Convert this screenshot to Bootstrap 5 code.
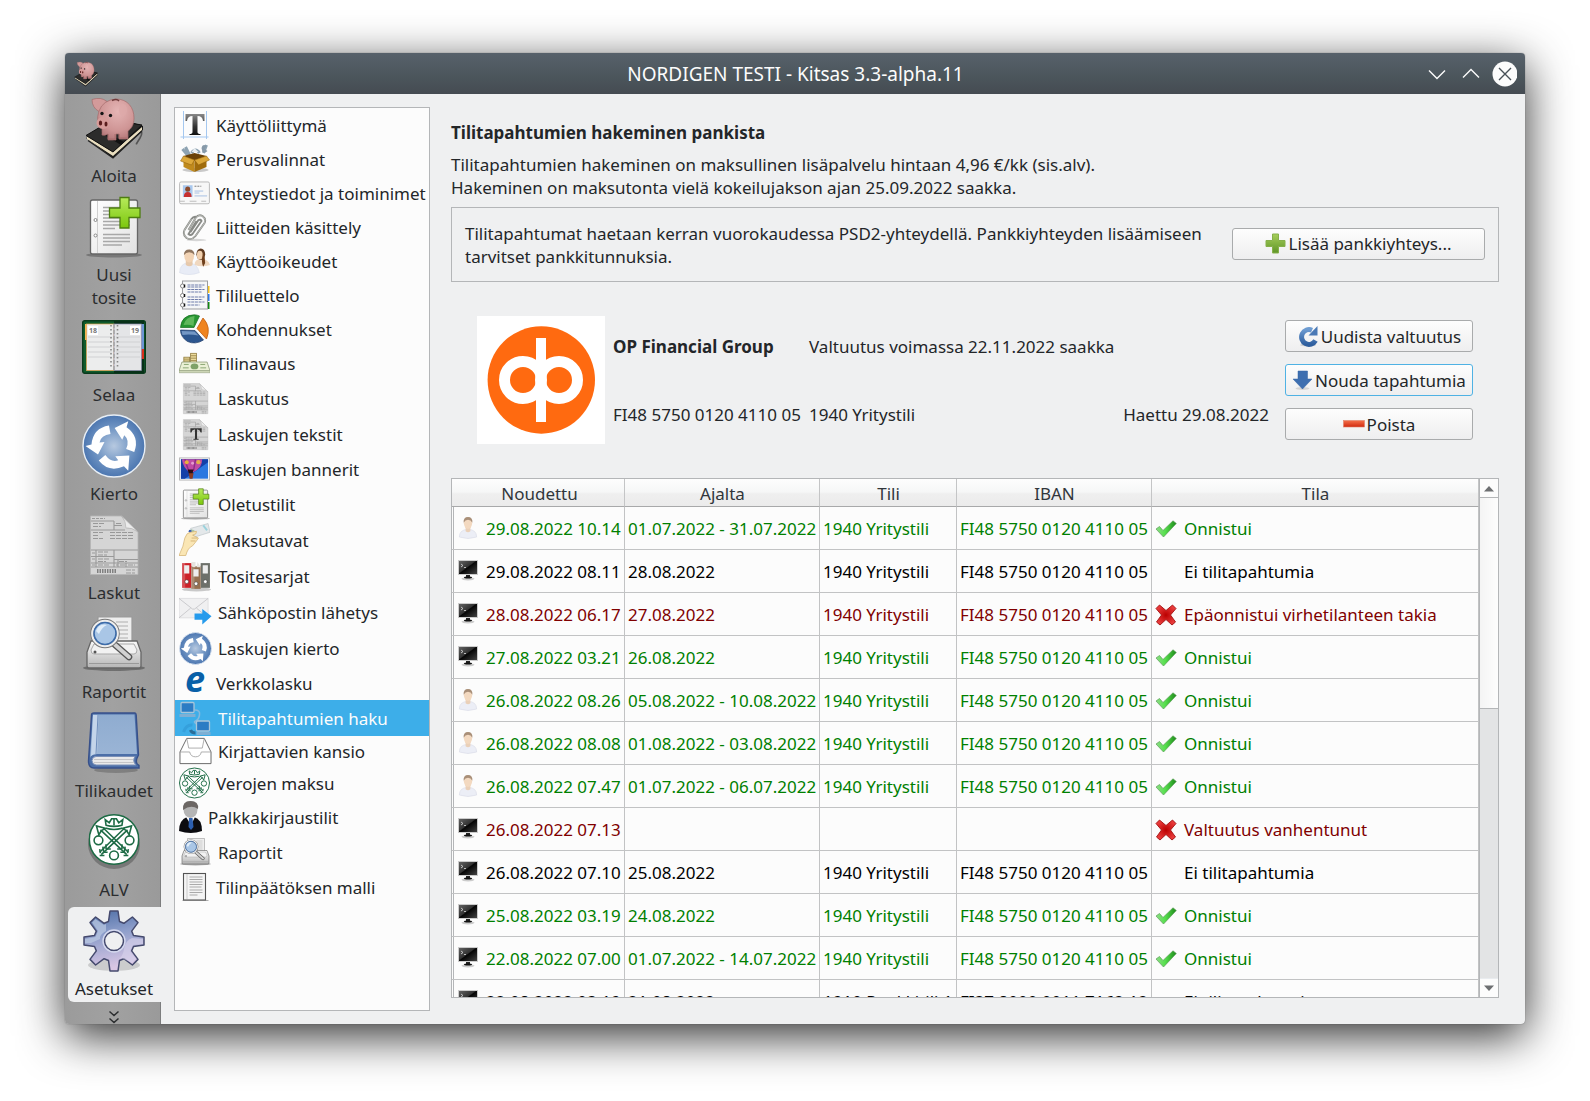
<!DOCTYPE html>
<html lang="fi">
<head>
<meta charset="utf-8">
<title>NORDIGEN TESTI - Kitsas 3.3-alpha.11</title>
<link href="https://cdn.jsdelivr.net/npm/bootstrap@5.3.0/dist/css/bootstrap.min.css" rel="stylesheet">
<style>
body{font-family:"Noto Sans",sans-serif;font-size:17px;line-height:23px;color:#232629;background:#fff;height:1101px;overflow:hidden;padding:53px 65px 0}
svg{flex:none;display:block}
.app-window{width:1460px;height:971px;border-radius:4px;background:#eff0f1;box-shadow:0 12px 46px rgba(0,0,0,.82),0 0 1px rgba(0,0,0,.6)}
.titlebar{height:41px;background:linear-gradient(#57616b,#4b555b 60%,#454b52);color:#fcfcfc;border-radius:4px 4px 0 0;padding:0 8px 0 8px}
.titlebar .caption{font-size:19px;line-height:26px;padding-left:1px}
.title-side{width:110px}
.app-body{height:930px}
.sidebar{width:96px;background:linear-gradient(90deg,#9b9b9b,#a1a1a1 50%,#9a9a9a);border-right:1px solid #7c7d7e;border-radius:0 0 0 4px;color:#2b2d2f}
.side-item{padding:2px 0 2px 3px;gap:4px;margin-bottom:4px;text-align:center}
.side-item.two-line{margin-bottom:2px}
.side-item.sel{background:#eff0f1;border-radius:6px 0 0 6px;margin:0 -1px 0 3px;padding-left:0;padding-right:1px;color:#232629}
.settings-list{width:256px;height:904px;margin:13px 0 0 13px;border:1px solid #b4b6b8;background:#fcfcfc}
.settings-list .list-group-item{height:34px;padding:0 0 0 4px;border:0;background:transparent;color:#232629;gap:6px;white-space:nowrap}
.settings-list .tall{height:36px}
.settings-list .h30{height:30px}
.settings-list .active{background:#3daee9;color:#fcfcfc}
.content-pane{width:1048px;margin:27px 0 0 21px}
.intro{margin-top:9px}
.frame-box{border:1px solid #b4b6b8;height:75px;margin-top:8px;padding:0 13px}
.btn-qt{height:32px;border:1px solid #a9abac;border-radius:3px;background:linear-gradient(#fdfdfd,#eeeeef);color:#232629;font-size:17px;line-height:23px;padding:0;display:flex;align-items:center;justify-content:center;gap:2px;white-space:nowrap}
.btn-qt svg{margin-top:-1px}
.btn-wide{width:253px;margin-bottom:2px}
.btn-qt.hot{border-color:#4fb2e4}
.bank{margin:34px 26px 0;height:128px}
.bank-info{margin:-4px 0 0 8px;width:656px}
.bank-info>div{height:68px}
.bank-name{width:196px}
.bank-buttons{width:188px;gap:12px;margin:4px 0 0 16px}
.log{height:520px;border:1px solid #b4b6b8;margin-top:34px;background:#fcfcfc;overflow:hidden}
.log-table{width:1027px;table-layout:fixed;margin:0;white-space:nowrap;font-size:17px;line-height:23px;border-collapse:separate;border-spacing:0}
.log-table th{height:28px;padding:1px 0 0 1px;font-weight:400;text-align:center;color:#31363b;background:linear-gradient(#fdfdfd,#f6f7f7 48%,#efefef 55%,#ebebeb);border:0;border-right:1px solid #c4c5c6;border-bottom:1px solid #a8a9aa}
.log-table th:first-child{padding-left:3px}
.log-table td{height:43px;padding:1px 3px 0;vertical-align:middle;background:transparent;border:0;border-right:1px solid #c2c3c4;border-bottom:1px solid #c2c3c4;color:inherit;box-shadow:none}
.log-table td:first-child{padding-left:6px;background:linear-gradient(#b4b6b8,#b4b6b8) 1px 0/1px 100% no-repeat}
.log-table .pair{display:flex;align-items:center;gap:8px}
.log-table .pair svg{margin-top:-2px}
.log-table td:last-child .pair{gap:7px}
.log-table td:last-child .pair svg{margin-top:0}
.ok{color:#008000}.err{color:#800000}.none{color:#000}
.scroller{width:19px;border-left:1px solid #b4b6b8}
.scroller .arrow{height:18px}
.thumb{height:212px;background:linear-gradient(90deg,#f4f4f4,#fdfdfd);border-top:1px solid #b4b6b8;border-bottom:1px solid #b4b6b8}
.trough{background:#e3e4e5}
</style>
<script src="https://cdn.jsdelivr.net/npm/bootstrap@5.3.0/dist/js/bootstrap.bundle.min.js"></script>
</head>
<body>
<svg width="0" height="0" class="position-absolute">
<defs>
<radialGradient id="gPig" cx=".55" cy=".3" r=".8"><stop offset="0" stop-color="#e5b5b5"/><stop offset=".6" stop-color="#cf9595"/><stop offset="1" stop-color="#a86c6e"/></radialGradient>
<radialGradient id="gCyc"><stop offset="0" stop-color="#b7c9e0"/><stop offset=".6" stop-color="#6f94c3"/><stop offset="1" stop-color="#4c76b0"/></radialGradient>
<linearGradient id="gGreen" x2="0" y2="1"><stop offset="0" stop-color="#b6ea5a"/><stop offset="1" stop-color="#7bc70c"/></linearGradient>
<linearGradient id="gPaper" x2="1" y2="1"><stop offset="0" stop-color="#fff"/><stop offset="1" stop-color="#e2e2e2"/></linearGradient>
<linearGradient id="gGear" x2=".2" y2="1"><stop offset="0" stop-color="#4b6da5"/><stop offset=".45" stop-color="#8f9fcb"/><stop offset="1" stop-color="#d9c6e4"/></linearGradient>
<linearGradient id="gBook" x2="0" y2="1"><stop offset="0" stop-color="#8facd0"/><stop offset="1" stop-color="#9bb5d6"/></linearGradient>
<linearGradient id="gMetal" x2="0" y2="1"><stop offset="0" stop-color="#fafafa"/><stop offset="1" stop-color="#b5b5b5"/></linearGradient>
<linearGradient id="gScr" x2="1" y2="1"><stop offset="0" stop-color="#666"/><stop offset=".45" stop-color="#333"/><stop offset=".5" stop-color="#050505"/><stop offset="1" stop-color="#484848"/></linearGradient>
<linearGradient id="gPlus" x2="0" y2="1"><stop offset="0" stop-color="#a7cf5b"/><stop offset="1" stop-color="#5f9527"/></linearGradient>
<linearGradient id="gBlue" x2="0" y2="1"><stop offset="0" stop-color="#6d9bd1"/><stop offset="1" stop-color="#2f5f9f"/></linearGradient>
<linearGradient id="gRed" x2="0" y2="1"><stop offset="0" stop-color="#f5704a"/><stop offset="1" stop-color="#d02a10"/></linearGradient>
<linearGradient id="gChk" x2="1"><stop offset="0" stop-color="#8fdc88"/><stop offset=".45" stop-color="#55e04c"/><stop offset="1" stop-color="#1f8a1b"/></linearGradient>
<radialGradient id="gX"><stop offset="0" stop-color="#b00"/><stop offset="1" stop-color="#e83a3a"/></radialGradient>
<linearGradient id="gT" x2="0" y2="1"><stop offset="0" stop-color="#888"/><stop offset=".6" stop-color="#333"/><stop offset="1" stop-color="#111"/></linearGradient>

<symbol id="pig" viewBox="0 0 64 64">
 <path d="M57 34q5 1 1 8q-5 8-3 5" fill="none" stroke="#555" stroke-width="1.600"/>
 <path d="M4 42L31 62L61 34V30L52 27L20 34Z" fill="#1a1a18"/>
 <path d="M5 43L31 60L60 34L60 31L31 56L5 40Z" fill="#eadfc0"/>
 <path d="M6 44.500L31 62L60 35" fill="none" stroke="#222" stroke-width="1.300"/>
 <path d="M4 39.500L30 24L60 29L31 56Z" fill="#2c2c2b" stroke="#111"/>
 <path d="M19 37L22 35L42 46L39 49Z" fill="#111"/>
 <path d="M10 3.500q9-3 15 2l-8 10q-7-4-7-12z" fill="#d39a9a" stroke="#a56b6b" stroke-width=".7"/>
 <path d="M34 3C46 3 52 12 52 22C52 29 49 33 46 35V43H37V38H34V44H26V38Q23 40 20 39V32Q13 27 17 15Q21 4 34 3Z" fill="url(#gPig)" stroke="#a56b6b" stroke-width=".7"/>
 <ellipse cx="21" cy="27" rx="6.500" ry="6" fill="#d79c9a"/><ellipse cx="18.500" cy="27" rx="1.700" ry="2.600" fill="#5a1d1d"/><ellipse cx="24" cy="28" rx="1.500" ry="2.500" fill="#5a1d1d"/>
 <circle cx="20" cy="17.500" r="1.700" fill="#151515"/><circle cx="28.500" cy="19.500" r="1.700" fill="#151515"/>
 <path d="M30 4.500q5-2 7 .5" stroke="#713c3c" stroke-width="1.500" fill="none"/><ellipse cx="41" cy="14" rx="4" ry="6" fill="#dda9a9" opacity=".8"/>
 <path d="M26 38v5h7v-5M37 38v4h8" fill="none" stroke="#a56b6b" stroke-width=".8"/>
</symbol>
<symbol id="newdoc" viewBox="0 0 64 64">
 <ellipse cx="32" cy="60" rx="28" ry="2.500" fill="#000" opacity=".25"/>
 <rect x="8.500" y="5" width="47" height="54" rx="2" fill="url(#gPaper)" stroke="#666" stroke-width="1.300"/>
 <path d="M15.500 6v52" stroke="#d0d0d0"/><circle cx="13.500" cy="25" r="1.500" fill="#fff" stroke="#888"/><circle cx="13.500" cy="40.500" r="1.500" fill="#fff" stroke="#888"/>
 <path d="M21 12.500h20M21 16h20M21 19.500h20M21 23h20M21 26.500h27M21 30h27M21 33.500h12M21 39.500h27M21 43h27M21 46.500h27M21 50h19" stroke="#a8a8a8" stroke-width="1.300"/>
 <path d="M38 2.500h9V13h11v9.500H47V33h-9V22.500H27.500V13H38Z" fill="url(#gGreen)" stroke="#4d7d10" stroke-width="1.300"/>
</symbol>
<symbol id="daybook" viewBox="0 0 64 54">
 <rect x=".7" y=".7" width="62.600" height="52.600" rx="2" fill="#0f5b2c" stroke="#0a3a1c" stroke-width="1.400"/><path d="M32 1h30v52H32z" fill="#073018"/>
 <rect x="3" y="4" width="14" height="16" fill="#f5b552"/><rect x="50" y="4" width="12" height="26" fill="#6d95d4"/><rect x="52" y="29" width="10" height="10" fill="#d8301c"/>
 <rect x="4.500" y="4" width="27.500" height="46.500" fill="#eceded" stroke="#e6a350" stroke-width=".7"/><rect x="32" y="4" width="27.500" height="46.500" fill="#e4e5e7" stroke="#88a" stroke-width=".7"/>
 <path d="M6 17h24M6 22h24M6 27h24M6 32h24M6 37h24M34 17h24M34 22h24M34 27h24M34 32h24M34 37h24" stroke="#d0d1d3"/>
 <rect x="6" y="6" width="10" height="9" fill="#fff"/><rect x="48" y="6" width="10" height="9" fill="#fff"/>
 <text x="7" y="13.300" font-size="7" font-weight="bold" fill="#777">18</text><text x="49" y="13.300" font-size="7" font-weight="bold" fill="#777">19</text>
 <path d="M29 5v44M35.500 5v44" stroke="#888" stroke-width="1.600" stroke-dasharray="1.500 2.500"/><path d="M32 4v46" stroke="#a8a8a8" stroke-width="1.600" stroke-dasharray="4 2"/>
</symbol>
<symbol id="cycle" viewBox="0 0 64 64">
 <circle cx="32" cy="32" r="31" fill="url(#gCyc)" stroke="#e7eef6" stroke-width="1.400"/>
 <g fill="#fff"><path id="cyArr" d="M27 11.500L28.500 20Q19 21 17.500 28.500L22.500 28L16 40.500L3.500 32L9.500 30.500Q11 14 27 11.500Z"/>
 <use href="#cyArr" transform="rotate(120 32 32)"/><use href="#cyArr" transform="rotate(240 32 32)"/></g>
</symbol>
<symbol id="invoice" viewBox="0 0 64 64">
 <path d="M8.500 3h31L56 19V61.500H8.500Z" fill="#d5d5d5" stroke="#b5b5b5" stroke-width=".8"/>
 <path d="M39.500 3Q45 10 44 15Q51 15 56 19Z" fill="#bcbcbc"/><path d="M39.500 3L56 19Q49 14 44 15Q44 8 39.500 3Z" fill="#ececec" stroke="#aaa" stroke-width=".5"/>
 <g stroke="#999" stroke-width="1.100" fill="none"><path d="M10 5.500h13" stroke-dasharray="3 1"/><path d="M9 8h23M32 8v9M9 17h34M32 12.500h8M9 37h47M9 43.500h23M9 50h47M9 54h47M14 37v17M32 37v17M32 46.500h24M36 46.500v7M44 50v4"/>
 <path d="M11 10.500h12M11 13.500h8M34 10.500h5M11 19.500h10M11 22.500h6M11 25.500h10M28 19.500h24M28 22.500h24M28 25.500h24M16 39h10M16 42h9M16 46h12M16 48.500h8M37 48.500h8M10 40h3M10 46h3M10 52h3M16 52h12M34 52h2M38 52h5M46 52h7M44 57h9M44 60h9" stroke-dasharray="5 1"/></g>
 <path d="M15 58h19" stroke="#808080" stroke-width="4" stroke-dasharray="1.500 1"/>
</symbol>
<symbol id="report" viewBox="0 0 64 64">
 <ellipse cx="32" cy="56" rx="31" ry="3" fill="#000" opacity=".3"/>
 <path d="M16 5h34v28H16z" fill="#eee" stroke="#999" stroke-width="1.200"/><path d="M34 10h12M34 14h12M34 18h12M34 22h12M34 26h12" stroke="#c4c4c4" stroke-width="1.500"/>
 <path d="M9 29H55L59 40V54Q59 56 57 56H7Q5 56 5 54V40Z" fill="url(#gMetal)" stroke="#666" stroke-width="1.300"/>
 <path d="M12 32H52L55 38Q55 42 52 42H12Q9 42 9 38Z" fill="#f2f2f2" stroke="#aaa"/><path d="M7 51.500h50" stroke="#999"/><circle cx="13" cy="40" r="1.500" fill="#555"/>
 <path d="M31 31L47 45" stroke="#555" stroke-width="6.500" stroke-linecap="round"/><path d="M31 31L47 45" stroke="#d2d2d2" stroke-width="4" stroke-linecap="round"/>
 <circle cx="23" cy="21.500" r="12.700" fill="#a9c6e6" stroke="#777" stroke-width="4"/><circle cx="23" cy="21.500" r="12.700" fill="none" stroke="#eee" stroke-width="2.300"/><circle cx="23" cy="21.500" r="11" fill="none" stroke="#3c6cab" stroke-width="1.500"/><path d="M14 19Q17 11 25 13Q20 15 17 22Z" fill="#e0edf9"/>
</symbol>
<symbol id="book" viewBox="0 0 64 64">
 <ellipse cx="34" cy="59" rx="22" ry="3" fill="#000" opacity=".2"/>
 <path d="M9.500 4Q9.500 2 12 2H53Q54 2 54.200 4L56.500 44Q52 52 57 54.500V57H12Q6.500 57 6.500 50Z" fill="#4c6fa8" stroke="#37508a" stroke-width="1.400"/>
 <path d="M11 3.500H52.500L55 43H15Q9 43 8 47Z" fill="url(#gBook)"/><path d="M11 4L9 45Q11 43 15 43L16.500 4" fill="#c4d5ea"/><path d="M16 4L14 43" stroke="#6f8ebc"/>
 <path d="M14 45.500H53Q50 50 54 54H14Q10 53.500 10 49.500Q10.500 45.500 14 45.500Z" fill="#e9e9ea" stroke="#7b90b8"/><path d="M12 48.500h39M12 51.500h40" stroke="#c5c5c8"/>
</symbol>
<symbol id="seal" viewBox="0 0 64 64">
 <circle cx="32" cy="32" r="31" fill="#fff" stroke="#1d6b45" stroke-width="2"/>
 <g fill="none" stroke="#1d6b45" stroke-width="2">
 <path d="M22 14l-1-7 5 4 3-5 3 0 3 0 3 5 5-4-1 7q-10 3-20 0zM22 18q10 3 20 0M32 6v8"/>
 <circle cx="12.500" cy="33" r="5.500"/><circle cx="51.500" cy="33" r="5.500"/><circle cx="32" cy="52" r="5.500"/>
 <path d="M15 20L48 51M18 17L50 48M49 20L16 51M46 17L14 48M10 15l3 11 3-5 5-3zM54 15l-3 11-3-5-5-3z"/>
 <path d="M14 44l1 5M18 41l1 6M22 38v6M50 44l-1 5M46 41l-1 6M42 38v6M20 52h-6M24 48h-6M28 44h-6M44 52h6M40 48h6M36 44h6"/></g>
</symbol>
<symbol id="gear" viewBox="0 0 64 64">
 <ellipse cx="32" cy="56" rx="26" ry="6" fill="#000" opacity=".15"/>
 <path fill-rule="evenodd" d="M26.500 12.500L28 2L36 2L37.500 12.500L41.900 14.300L50.400 8L56 13.600L49.700 22.100L51.500 26.500L62 28L62 36L51.500 37.500L49.700 41.900L56 50.400L50.400 56L41.900 49.700L37.500 51.500L36 62L28 62L26.500 51.500L22.100 49.700L13.600 56L8 50.400L14.300 41.900L12.500 37.500L2 36L2 28L12.500 26.500L14.300 22.100L8 13.600L13.600 8L22.100 14.300ZM32 22.500A9.500 9.500 0 1 0 32 41.500A9.500 9.500 0 1 0 32 22.500Z" fill="url(#gGear)" stroke="#454a6e" stroke-width="1.500" stroke-linejoin="round"/>
 <path d="M3 30L13.500 28L16 22L10 13.500L13.500 10L22 16L24 15V22Q17 26 18 30L9 34H3Z" fill="#bccbe3" opacity=".7"/><path d="M61 30L50 29Q43 32 42 40Q41 47 37 50L40 49L50 54L54 50L48 42L51 36L61 35Z" fill="#d8d3ec" opacity=".6"/>
 <circle cx="32" cy="32" r="11" fill="none" stroke="#d5d9ee" stroke-width="1.300"/>
</symbol>

<symbol id="typeT" viewBox="0 0 30 30"><path d="M4 1v28M27 1v28M1 27h28" stroke="#a5c8f0" fill="none"/><path d="M6 4H25V11H23.500Q23 6 18 6V22Q18 24 21 24V25H10V24Q13 24 13 22V6Q8 6 7.500 11H6Z" fill="url(#gT)"/></symbol>
<symbol id="toolbox" viewBox="0 0 30 30"><ellipse cx="16" cy="26" rx="13" ry="2" fill="#000" opacity=".2"/><path d="M3 5l5 6M6 3l4 8M24 9l3-8M12 9q4-6 8 0" stroke="#8ea3b2" stroke-width="3" fill="none"/><path d="M22 4q1-5 5-2l-2 3 3 2q-3 3-5 1" fill="#8799a8"/><path d="M12 8l3-4 4 4z" fill="#e9eef1"/><path d="M4 12L15 9L27 12L15 17Z" fill="#6b4208"/><path d="M4 12L15 16V28L4 23Z" fill="#c08a1c"/><path d="M27 12L15 16V28L27 23Z" fill="#a06c0c"/><path d="M4 12L1 17L12 21L15 16ZM27 12L30 16L19 21L15 16Z" fill="#dca83a" stroke="#8a5c0a" stroke-width=".5"/></symbol>
<symbol id="idcard" viewBox="0 0 32 24"><rect x=".6" y=".6" width="30.800" height="22.500" rx="1.500" fill="#f7f7f7" stroke="#b9b9b9"/><rect x="4" y="4" width="10" height="12" fill="#a9c8ee"/><circle cx="9" cy="8" r="2.600" fill="#8b4a2c"/><path d="M5 16q0-5 4-5t4 5z" fill="#c63030"/><path d="M16 5h7" stroke="#777" stroke-dasharray="2 1"/><path d="M16 10h9M16 12h5M16 15h13" stroke="#a4bfe2"/><path d="M1 20.500h30" stroke="#bbb" stroke-dasharray="5 5 7 5"/></symbol>
<symbol id="clip" viewBox="0 0 30 30"><ellipse cx="17" cy="28" rx="10" ry="1.200" fill="#000" opacity=".15"/><path d="M9 18L16 6Q19 2 23 4Q27 7 25 11L16 24Q12 29 7 26Q3 23 5 18L12 7Q14 4 17 5M11 20L19 8Q21 7 22 9L13 22Q11 24 9 22L17 9" fill="none" stroke="#888a86" stroke-width="1.900"/><path d="M9 18L16 6Q19 2 23 4Q27 7 25 11L16 24Q12 29 7 26Q3 23 5 18L12 7" fill="none" stroke="#d5d6d2" stroke-width=".6"/></symbol>
<symbol id="users" viewBox="0 0 32 28"><path d="M16 18q0-6 7-6t9 6q-8 3-16 0z" fill="#f0d8c0"/><ellipse cx="22.500" cy="7" rx="4.500" ry="6" fill="#5e3a20"/><ellipse cx="21.500" cy="8" rx="3" ry="4.500" fill="#f1d0ae"/><path d="M25 5q2 5 2 11l-2 4q-2-5-1-9z" fill="#70401c"/><path d="M.5 26Q1 16 10 16T21 26Q10 30 .5 26Z" fill="#e8ecf6" stroke="#d2d7e6" stroke-width=".5"/><path d="M7 13h7v5q-3 3-7 0z" fill="#e6c9ac"/><ellipse cx="10.500" cy="9" rx="5" ry="6.500" fill="#f2d3b4"/><path d="M5 8Q5 2 10.500 2T16 8Q14 5 10.500 5T5 8Z" fill="#8f755e"/></symbol>
<symbol id="notebook" viewBox="0 0 30 30"><rect x="26" y="6" width="4" height="7" fill="#f3c21c"/><rect x="26" y="14" width="4" height="7" fill="#2f79e8"/><rect x="26" y="22" width="4" height="7" fill="#118811"/><rect x="3" y="1" width="25" height="28" fill="#f5f6f7" stroke="#9a9c9f"/><path d="M8 5h17M8 7h15M8 9.500h17M8 12h14M8 17h17M8 19.500h15M8 22h17M8 25h12" stroke="#6e7cab" stroke-width="1.100" stroke-dasharray="3 .7"/><g fill="#fff" stroke="#888"><circle cx="3" cy="6" r="2"/><circle cx="3" cy="15.500" r="2"/><circle cx="3" cy="25" r="2"/></g><path d="M5 4.500v3M5 14v3M5 23.500v3" stroke="#111" stroke-width="1.500"/></symbol>
<symbol id="pie" viewBox="0 0 30 30"><path d="M14.500 13.500L1 13.500Q2 1 15 .8Q18 1 20 2Z" fill="#279632" stroke="#176b1f" stroke-width=".7"/><path d="M14 12Q10 10 4 11Q6 3 15 2Z" fill="#86cf78" opacity=".6"/><path d="M17.500 14.500L23.500 4Q32 13 27 25Z" fill="#ef8420" stroke="#c05c0c" stroke-width=".8"/><path d="M1 16L15.500 16.500L24 26Q16 31 8 27.500Q1 23 1 16Z" fill="#2c568f" stroke="#1c3b68" stroke-width=".7"/><path d="M2 17L15 17.500L19 21.500Q10 20 3 21Z" fill="#86a7d2" opacity=".8"/></symbol>
<symbol id="cash" viewBox="0 0 32 24"><g fill="#ecdb9c" stroke="#8f7a3d" stroke-width=".8"><rect x="5" y="6" width="6" height="8"/><rect x="12" y="2" width="6" height="12"/><path d="M5 8h6M5 10h6M5 12h6M12 4.500h6M12 7h6M12 9.500h6"/></g><path d="M3 11H29L32 20H0Z" fill="#eaf0d5" stroke="#8b9977" stroke-width=".8"/><path d="M0 20h32v2H0z" fill="#d8e0c0" stroke="#8b9977" stroke-width=".6"/><ellipse cx="16" cy="15.500" rx="4" ry="3" fill="#7fa268"/><path d="M5 13.500h5M22 13.500h5M4 17h6M22 17h6" stroke="#8aa674"/></symbol>
<symbol id="invT" viewBox="0 0 32 32"><use href="#invoice" width="32" height="32"/><path d="M11 10H22V14H21Q20.500 11.500 17.500 11V20H19V21H14V20H15.500V11Q12.500 11.500 12 14H11Z" fill="#333"/></symbol>
<symbol id="balloon" viewBox="0 0 32 24"><rect x=".6" y=".6" width="30.800" height="22.800" fill="#fff" stroke="#b5b5b5"/><rect x="2" y="2" width="28" height="20" fill="#2c78e0"/><path d="M2 2h28v3L6 22H2z" fill="#1440a8"/><path d="M3 2H24Q24 11 15 15H11Q4 11 3 2Z" fill="#c04ba4"/><path d="M6 2l4 12M17 2l-2 12" stroke="#8c2f88" stroke-width="1.500"/><circle cx="8" cy="5" r="2" fill="#e8b23a"/><circle cx="20" cy="5" r="2.200" fill="#e2b04a"/><circle cx="14" cy="6" r="1.500" fill="#e59ad0"/><path d="M10 16h5l-1 6h-3z" fill="#8a3a20"/><path d="M9 12.500h6l-1 4h-4z" fill="#2a0c14"/></symbol>
<symbol id="hand" viewBox="0 0 32 34"><path d="M12 5L30 0L32 9L16 14Z" fill="#e4e8ea" stroke="#bcc3c6" stroke-width=".7"/><path d="M12 6l4 1-1 6z" fill="#a6c7a8"/><circle cx="11.500" cy="8" r="1.500" fill="#3c5fb0"/><path d="M25 2l4 5" stroke="#9bd2dc" stroke-width="2"/><path d="M0 33Q5 23 6 15Q8 9 12 9L18 8Q19 11 14 12L20 15L18 18L14 23Q9 25 7 33Z" fill="#fae6b4" stroke="#d5b577" stroke-width=".8"/><path d="M13 15h6M12 18h5" stroke="#d5b577"/></symbol>
<symbol id="binders" viewBox="0 0 32 30"><ellipse cx="17" cy="27.500" rx="14" ry="2" fill="#000" opacity=".2"/><path d="M3 2h9v24H3z" fill="#cc2229"/><path d="M21 2h9v24h-9z" fill="#6d706a"/><path d="M12 5h9v22h-9z" fill="#957050"/><path d="M12 1h4v5h-3zM18 1l3 5h-4z" fill="#e6e4df"/><path d="M5 4h5v8H5zM14 8h5v7h-5zM23 4h5v8h-5z" fill="#ededed"/><path d="M3 2h3v24H3zM12 7h3v20h-3z" fill="#fff" opacity=".2"/><g fill="#fff" stroke="#333" stroke-width=".5"><circle cx="7.500" cy="20" r="1.800"/><circle cx="16.500" cy="22" r="1.800"/><circle cx="25.500" cy="20" r="1.800"/></g></symbol>
<symbol id="mail" viewBox="0 0 34 32"><path d="M0 2H30V22H0Z" fill="#f0f0f1" stroke="#d5d6d8" stroke-width=".7"/><path d="M0 2L14 13H16L30 2M0 22L12 12M30 22L18 12" fill="none" stroke="#bfc0c3" stroke-width=".8"/><path d="M16 17.500H24V13L33.500 20.500L24 29V24H16Z" fill="#269bec"/></symbol>
<symbol id="netw" viewBox="0 0 32 34"><path d="M15 9q6 0 5 5t-4 6 3 4" fill="none" stroke="#87b9dc" stroke-width="1.500"/><rect x="1.500" y="1.500" width="13" height="10" rx="1" fill="#2c7cc4" stroke="#a9c6da" stroke-width="1.300"/><path d="M0 13h16v3H0zM17 31h14v3H17z" fill="#7fb0d4"/><rect x="17" y="20" width="13" height="10" rx="1" fill="#2c7cc4" stroke="#a9c6da" stroke-width="1.300"/><path d="M4 31q3-8 9-7" stroke="#35a0dc" stroke-width="3" fill="none"/><path d="M11 29q1 3 5 3" stroke="#2b6d98" stroke-width="3" fill="none"/></symbol>
<symbol id="tray" viewBox="0 0 34 28"><path d="M8 1H26L33 15V27H1V15Z" fill="#fff" stroke="#666" stroke-width="1"/><path d="M1 15H11Q12 20 17 20T23 15H33M8 1L10 11M26 1L24 11M10 11H24" fill="none" stroke="#999" stroke-width=".8"/></symbol>
<symbol id="suit" viewBox="0 0 23 32"><path d="M0 30Q0 19 8 16L15 16Q23 18 23 30Q12 34 0 30Z" fill="#0c0c10"/><path d="M7 16L12 24L16 16Z" fill="#fff"/><path d="M10 17h3.500l1 9-2.500 3-2.500-3z" fill="#2c5fb0"/><ellipse cx="11.500" cy="8.500" rx="7" ry="8.500" fill="#b5b5b5"/><path d="M4 9Q3 0 11.500 0T19 8Q12 3 4 9Z" fill="#6c6764"/></symbol>
<symbol id="doc" viewBox="0 0 30 30"><path d="M3 28.500h26" stroke="#000" opacity=".3"/><rect x="4" y="1.500" width="22" height="26.500" fill="#f4f4f4" stroke="#555" stroke-width="1.100"/><path d="M7.500 2v25" stroke="#ccc"/><path d="M10 5h13M10 7.500h13M10 10h13M10 12.500h13M10 15h12M10 18h13M10 20.500h13M10 23h8" stroke="#aaa"/></symbol>

<symbol id="person" viewBox="0 0 20 24"><path d="M1 22Q1 14 10 14T19 22Q10 25 1 22Z" fill="#eceef6" stroke="#d6d8e4" stroke-width=".6"/><path d="M7.500 11h5v5q-2.500 2-5 0z" fill="#ead0b8"/><ellipse cx="10" cy="7.500" rx="4.300" ry="6" fill="#f3d9c0"/><path d="M5.400 7Q5 1 10 1T14.600 7Q13 4 10 4T5.400 7Z" fill="#a98f78"/></symbol>
<symbol id="term" viewBox="0 0 20 21"><rect x=".5" y=".5" width="19" height="14" fill="url(#gScr)" stroke="#ccc"/><path d="M3 4l2 1.500L3 7M6 7.500h2" stroke="#ddd" fill="none" stroke-width=".8"/><path d="M8 15h4v2H8z" fill="#222"/><ellipse cx="10" cy="18.800" rx="6.500" ry="1.600" fill="#ccc"/><ellipse cx="10" cy="17.500" rx="4" ry="1.100" fill="#111"/></symbol>
<symbol id="check" viewBox="0 0 22 18"><path d="M1 9L4.500 6.500L8 10.500L18 .8L21.300 3.500L8.500 17Z" fill="url(#gChk)" stroke="#5a9c58" stroke-width=".7"/></symbol>
<symbol id="cross" viewBox="0 0 22 22"><path d="M4.500 1L11 6.500L17.500 1L21 4.500L15.500 11L20.500 18L17 21L11 15.500L5 21L1.500 18L6.500 11L1 4.500Z" fill="url(#gX)" stroke="#a01010" stroke-width=".9" stroke-linejoin="round"/></symbol>
</defs></svg>

<div class="app-window d-flex flex-column">
 <header class="titlebar d-flex align-items-center justify-content-between">
  <div class="title-side"><svg width="26" height="28"><use href="#pig"/></svg></div>
  <div class="caption">NORDIGEN TESTI - Kitsas 3.3-alpha.11</div>
  <div class="title-side d-flex justify-content-end align-items-center">
   <svg width="92" height="26" viewBox="0 0 92 26" fill="none" stroke="#fcfcfc" stroke-width="1.400"><path d="M4 9.500l8 8 8-8M38 16.500l8-8 8 8"/><circle cx="80" cy="13" r="12.500" fill="#fcfcfc" stroke="none"/><path d="M74 7l12 12M86 7L74 19" stroke="#475057"/></svg>
  </div>
 </header>
 <div class="app-body d-flex">
  <nav class="sidebar d-flex flex-column">
   <div class="side-item d-flex flex-column align-items-center"><svg width="64" height="64"><use href="#pig"/></svg><span>Aloita</span></div>
   <div class="side-item two-line d-flex flex-column align-items-center"><svg width="64" height="64"><use href="#newdoc"/></svg><span>Uusi<br>tosite</span></div>
   <div class="side-item d-flex flex-column align-items-center"><svg width="64" height="64"><use href="#daybook"/></svg><span>Selaa</span></div>
   <div class="side-item d-flex flex-column align-items-center"><svg width="64" height="64"><use href="#cycle"/></svg><span>Kierto</span></div>
   <div class="side-item d-flex flex-column align-items-center"><svg width="64" height="64"><use href="#invoice"/></svg><span>Laskut</span></div>
   <div class="side-item d-flex flex-column align-items-center"><svg width="64" height="64"><use href="#report"/></svg><span>Raportit</span></div>
   <div class="side-item d-flex flex-column align-items-center"><svg width="64" height="64"><use href="#book"/></svg><span>Tilikaudet</span></div>
   <div class="side-item d-flex flex-column align-items-center"><svg width="64" height="64" viewBox="0 0 64 64"><ellipse cx="32" cy="34" rx="26" ry="25" fill="#000" opacity=".25"/><use href="#seal" x="6.500" y="4" width="51" height="51"/></svg><span>ALV</span></div>
   <div class="side-item sel d-flex flex-column align-items-center"><svg width="64" height="64"><use href="#gear"/></svg><span>Asetukset</span></div>
   <svg class="mt-2" style="margin-left:43px" width="12" height="14" fill="none" stroke="#2b2d2f" stroke-width="1.500"><path d="M1.500 1.500l4.500 4 4.500-4M1.500 8.500l4.500 4 4.500-4"/></svg>
  </nav>
  <div class="settings-list list-group rounded-0">
   <div class="list-group-item d-flex align-items-center"><svg width="31" height="30"><use href="#typeT"/></svg>Käyttöliittymä</div>
   <div class="list-group-item d-flex align-items-center"><svg width="31" height="30"><use href="#toolbox"/></svg>Perusvalinnat</div>
   <div class="list-group-item d-flex align-items-center"><svg width="31" height="30"><use href="#idcard"/></svg>Yhteystiedot ja toiminimet</div>
   <div class="list-group-item d-flex align-items-center"><svg width="31" height="30"><use href="#clip"/></svg>Liitteiden käsittely</div>
   <div class="list-group-item d-flex align-items-center"><svg width="31" height="30"><use href="#users"/></svg>Käyttöoikeudet</div>
   <div class="list-group-item d-flex align-items-center"><svg width="31" height="30"><use href="#notebook"/></svg>Tililuettelo</div>
   <div class="list-group-item d-flex align-items-center"><svg width="31" height="30"><use href="#pie"/></svg>Kohdennukset</div>
   <div class="list-group-item d-flex align-items-center"><svg width="31" height="30"><use href="#cash"/></svg>Tilinavaus</div>
   <div class="list-group-item tall d-flex align-items-center"><svg width="33" height="33"><use href="#invoice"/></svg>Laskutus</div>
   <div class="list-group-item tall d-flex align-items-center"><svg width="33" height="33"><use href="#invT"/></svg>Laskujen tekstit</div>
   <div class="list-group-item d-flex align-items-center"><svg width="31" height="30"><use href="#balloon"/></svg>Laskujen bannerit</div>
   <div class="list-group-item tall d-flex align-items-center"><svg width="33" height="34"><use href="#newdoc"/></svg>Oletustilit</div>
   <div class="list-group-item tall d-flex align-items-center"><svg width="31" height="34"><use href="#hand"/></svg>Maksutavat</div>
   <div class="list-group-item tall d-flex align-items-center"><svg width="33" height="31"><use href="#binders"/></svg>Tositesarjat</div>
   <div class="list-group-item tall d-flex align-items-center"><svg width="33" height="32"><use href="#mail"/></svg>Sähköpostin lähetys</div>
   <div class="list-group-item tall d-flex align-items-center"><svg width="33" height="33"><use href="#cycle"/></svg>Laskujen kierto</div>
   <div class="list-group-item d-flex align-items-center"><svg width="31" height="30" viewBox="0 0 30 30" overflow="visible"><text x="5.500" y="24" font-size="36" font-weight="bold" font-style="italic" font-family="Open Sans, sans-serif" fill="#0860a8">e</text></svg>Verkkolasku</div>
   <div class="list-group-item active tall d-flex align-items-center rounded-0 m-0"><svg width="33" height="34"><use href="#netw"/></svg>Tilitapahtumien haku</div>
   <div class="list-group-item h30 d-flex align-items-center"><svg width="33" height="28"><use href="#tray"/></svg>Kirjattavien kansio</div>
   <div class="list-group-item d-flex align-items-center"><svg width="31" height="32"><use href="#seal"/></svg>Verojen maksu</div>
   <div class="list-group-item d-flex align-items-center"><svg width="23" height="32"><use href="#suit"/></svg>Palkkakirjaustilit</div>
   <div class="list-group-item tall d-flex align-items-center"><svg width="33" height="32"><use href="#report"/></svg>Raportit</div>
   <div class="list-group-item d-flex align-items-center"><svg width="31" height="30"><use href="#doc"/></svg>Tilinpäätöksen malli</div>
  </div>
  <main class="content-pane">
   <div class="fw-bold">Tilitapahtumien hakeminen pankista</div>
   <div class="intro">Tilitapahtumien hakeminen on maksullinen lisäpalvelu hintaan 4,96 €/kk (sis.alv).<br>Hakeminen on maksutonta vielä kokeilujakson ajan 25.09.2022 saakka.</div>
   <div class="frame-box d-flex align-items-center justify-content-between">
    <div>Tilitapahtumat haetaan kerran vuorokaudessa PSD2-yhteydellä. Pankkiyhteyden lisäämiseen<br>tarvitset pankkitunnuksia.</div>
    <button class="btn btn-qt btn-wide"><svg width="21" height="21" viewBox="0 0 21 21"><path d="M7.500 1h6v6.500H20v6h-6.500V20h-6v-6.500H1v-6h6.500z" fill="url(#gPlus)" stroke="#86b04a"/></svg>Lisää pankkiyhteys...</button>
   </div>
   <div class="bank d-flex">
    <svg width="128" height="128" viewBox="0 0 128 128"><rect width="128" height="128" fill="#fff"/><circle cx="64.300" cy="64" r="53.700" fill="#ff6a10"/><g fill="none" stroke="#fff" stroke-width="11"><circle cx="46" cy="64" r="18.500"/><circle cx="82" cy="64" r="18.500"/></g><path d="M59 22h10v84H59z" fill="#fff"/></svg>
    <div class="bank-info">
     <div class="d-flex align-items-center"><span class="bank-name fw-bold">OP Financial Group</span><span>Valtuutus voimassa 22.11.2022 saakka</span></div>
     <div class="d-flex align-items-center"><span class="bank-name">FI48 5750 0120 4110 05</span><span>1940 Yritystili</span><span class="ms-auto">Haettu 29.08.2022</span></div>
    </div>
    <div class="bank-buttons d-flex flex-column">
     <button class="btn btn-qt"><svg width="22" height="22" viewBox="0 0 22 22"><ellipse cx="11" cy="20" rx="8" ry="1.500" fill="#000" opacity=".15"/><path d="M18.500 15.500A7.400 7.400 0 1 1 15 5.200" fill="none" stroke="url(#gBlue)" stroke-width="5"/><path d="M20.500 1V10.500H11.500Z" fill="#4a79b5"/></svg>Uudista valtuutus</button>
     <button class="btn btn-qt hot"><svg width="21" height="22" viewBox="0 0 21 22"><ellipse cx="10.500" cy="19.500" rx="7" ry="1.500" fill="#000" opacity=".12"/><path d="M6 2h9.500v8H20L10.500 20L1 10h5z" fill="#3e6fb0" stroke="#3565a5" stroke-width=".5"/></svg>Nouda tapahtumia</button>
     <button class="btn btn-qt"><svg width="22" height="20" viewBox="0 0 22 20"><rect x=".5" y="6.500" width="21" height="6.500" fill="url(#gRed)" stroke="#e0806a" stroke-width=".6"/></svg>Poista</button>
    </div>
   </div>
   <div class="log d-flex">
    <div class="flex-grow-1 overflow-hidden">
    <table class="log-table">
     <colgroup><col style="width:173px"><col style="width:195px"><col style="width:137px"><col style="width:195px"><col></colgroup>
     <thead><tr><th>Noudettu</th><th>Ajalta</th><th>Tili</th><th>IBAN</th><th>Tila</th></tr></thead>
     <tbody>
      <tr class="ok"><td><div class="pair"><svg width="20" height="23"><use href="#person"/></svg>29.08.2022 10.14</div></td><td>01.07.2022 - 31.07.2022</td><td>1940 Yritystili</td><td>FI48 5750 0120 4110 05</td><td><div class="pair"><svg width="22" height="18"><use href="#check"/></svg>Onnistui</div></td></tr>
      <tr class="none"><td><div class="pair"><svg width="20" height="21"><use href="#term"/></svg>29.08.2022 08.11</div></td><td>28.08.2022</td><td>1940 Yritystili</td><td>FI48 5750 0120 4110 05</td><td><div class="pair"><svg width="22" height="18"></svg>Ei tilitapahtumia</div></td></tr>
      <tr class="err"><td><div class="pair"><svg width="20" height="21"><use href="#term"/></svg>28.08.2022 06.17</div></td><td>27.08.2022</td><td>1940 Yritystili</td><td>FI48 5750 0120 4110 05</td><td><div class="pair"><svg width="22" height="22"><use href="#cross"/></svg>Epäonnistui virhetilanteen takia</div></td></tr>
      <tr class="ok"><td><div class="pair"><svg width="20" height="21"><use href="#term"/></svg>27.08.2022 03.21</div></td><td>26.08.2022</td><td>1940 Yritystili</td><td>FI48 5750 0120 4110 05</td><td><div class="pair"><svg width="22" height="18"><use href="#check"/></svg>Onnistui</div></td></tr>
      <tr class="ok"><td><div class="pair"><svg width="20" height="23"><use href="#person"/></svg>26.08.2022 08.26</div></td><td>05.08.2022 - 10.08.2022</td><td>1940 Yritystili</td><td>FI48 5750 0120 4110 05</td><td><div class="pair"><svg width="22" height="18"><use href="#check"/></svg>Onnistui</div></td></tr>
      <tr class="ok"><td><div class="pair"><svg width="20" height="23"><use href="#person"/></svg>26.08.2022 08.08</div></td><td>01.08.2022 - 03.08.2022</td><td>1940 Yritystili</td><td>FI48 5750 0120 4110 05</td><td><div class="pair"><svg width="22" height="18"><use href="#check"/></svg>Onnistui</div></td></tr>
      <tr class="ok"><td><div class="pair"><svg width="20" height="23"><use href="#person"/></svg>26.08.2022 07.47</div></td><td>01.07.2022 - 06.07.2022</td><td>1940 Yritystili</td><td>FI48 5750 0120 4110 05</td><td><div class="pair"><svg width="22" height="18"><use href="#check"/></svg>Onnistui</div></td></tr>
      <tr class="err"><td><div class="pair"><svg width="20" height="21"><use href="#term"/></svg>26.08.2022 07.13</div></td><td></td><td></td><td></td><td><div class="pair"><svg width="22" height="22"><use href="#cross"/></svg>Valtuutus vanhentunut</div></td></tr>
      <tr class="none"><td><div class="pair"><svg width="20" height="21"><use href="#term"/></svg>26.08.2022 07.10</div></td><td>25.08.2022</td><td>1940 Yritystili</td><td>FI48 5750 0120 4110 05</td><td><div class="pair"><svg width="22" height="18"></svg>Ei tilitapahtumia</div></td></tr>
      <tr class="ok"><td><div class="pair"><svg width="20" height="21"><use href="#term"/></svg>25.08.2022 03.19</div></td><td>24.08.2022</td><td>1940 Yritystili</td><td>FI48 5750 0120 4110 05</td><td><div class="pair"><svg width="22" height="18"><use href="#check"/></svg>Onnistui</div></td></tr>
      <tr class="ok"><td><div class="pair"><svg width="20" height="21"><use href="#term"/></svg>22.08.2022 07.00</div></td><td>01.07.2022 - 14.07.2022</td><td>1940 Yritystili</td><td>FI48 5750 0120 4110 05</td><td><div class="pair"><svg width="22" height="18"><use href="#check"/></svg>Onnistui</div></td></tr>
      <tr class="none"><td><div class="pair"><svg width="20" height="21"><use href="#term"/></svg>22.08.2022 03.19</div></td><td>21.08.2022</td><td>1910 Pankkitili 1</td><td>FI37 8000 0011 7162 12</td><td><div class="pair"><svg width="22" height="18"></svg>Ei tilitapahtumia</div></td></tr>
     </tbody>
    </table>
    </div>
    <div class="scroller d-flex flex-column">
     <div class="arrow d-flex align-items-center justify-content-center"><svg width="12" height="7"><path d="M1 6.500L6 1l5 5.500z" fill="#6d6f71"/></svg></div>
     <div class="thumb"></div>
     <div class="trough flex-grow-1 border-bottom border-secondary-subtle"></div>
     <div class="arrow d-flex align-items-center justify-content-center"><svg width="12" height="7"><path d="M1 .5L6 6l5-5.500z" fill="#6d6f71"/></svg></div>
    </div>
   </div>
  </main>
 </div>
</div>
</body>
</html>
